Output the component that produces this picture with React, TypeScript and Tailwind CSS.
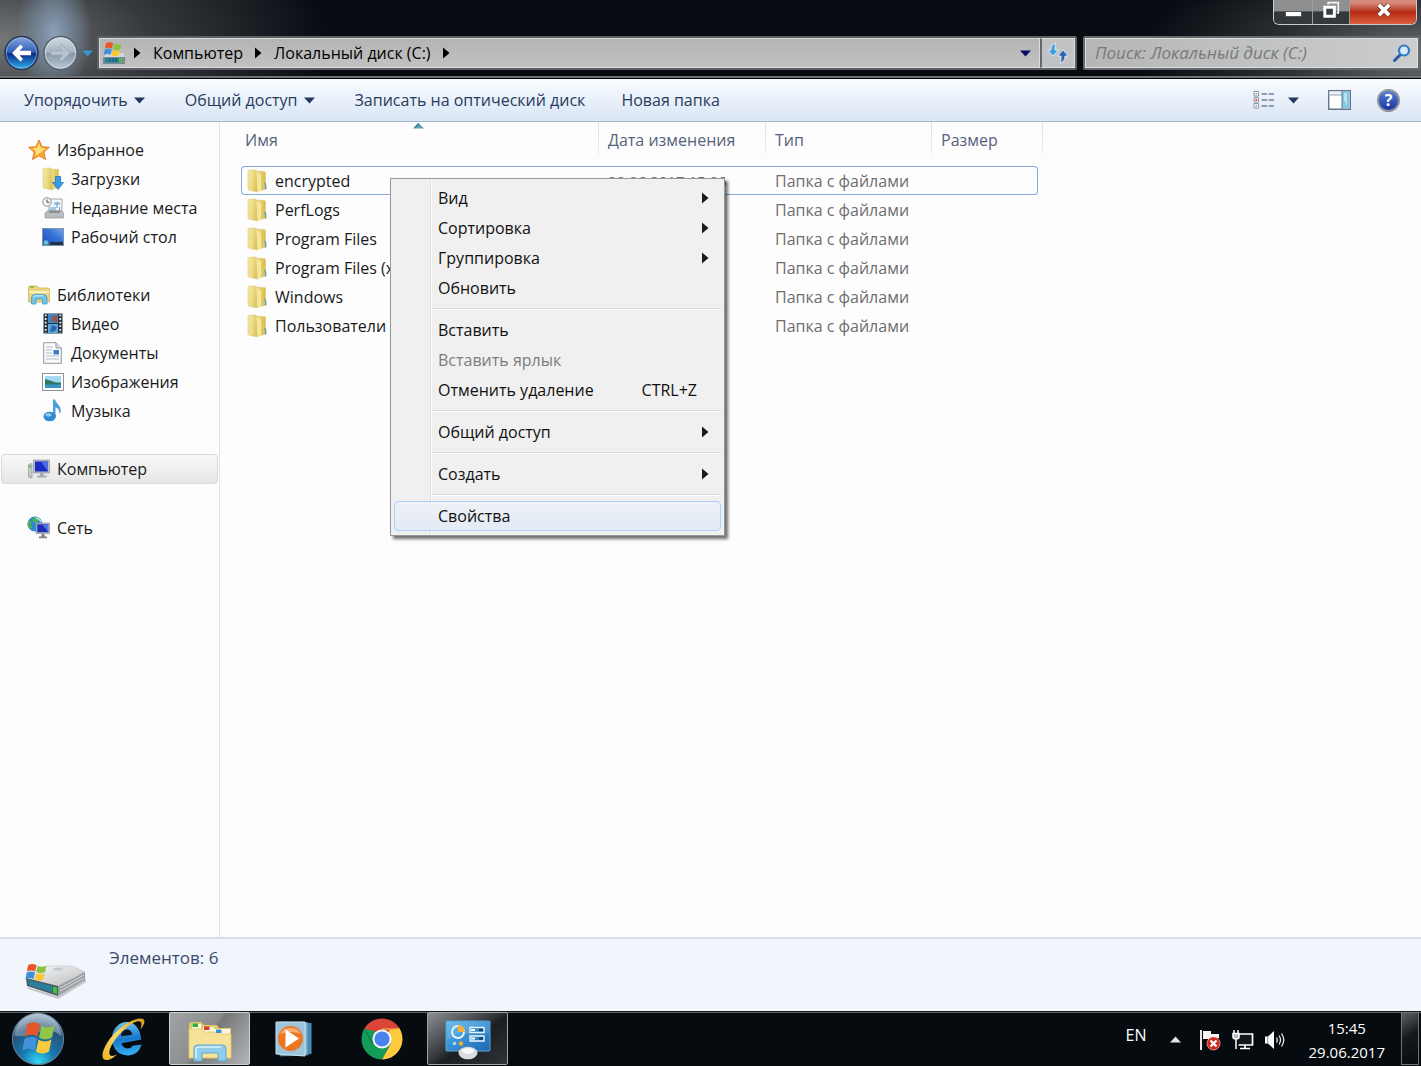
import React from "react";

/* ---------- shared drawings ---------- */

function FlagShapes() {
  return (
    <>
      <path d="M1 3.2C4 1.6 7 1.6 9.6 3.2L8.2 9.6C5.6 8.2 2.8 8.2 0 9.6Z" fill="#e8562a" />
      <path d="M10.6 3.7C13.4 5.2 16.4 5.2 19.4 3.7L18 10.1C15 11.6 12 11.6 9.2 10.1Z" fill="#8cc33c" />
      <path d="M-.2 10.6C2.6 9.2 5.4 9.2 8 10.6L6.6 17C4 15.6 1.2 15.6-1.6 17Z" fill="#3f8fdc" />
      <path d="M9 11.2C11.8 12.6 14.8 12.6 17.8 11.2L16.4 17.6C13.4 19 10.4 19 7.6 17.6Z" fill="#fbc62e" />
    </>
  );
}

function DriveIcon() {
  return (
    <svg width="24" height="26" viewBox="0 0 24 26" aria-hidden="true">
      <path d="M1 18L5 13H21L23 18V24H1Z" fill="#d5d8da" />
      <path d="M1 17H23V24H1Z" fill="#7b8b92" />
      <path d="M3 18H17V22.500H3Z" fill="#2b7f9d" />
      <path d="M8 18v4M11 18v4M14 18v4" stroke="#1d5871" />
      <path d="M17 18h3v4.500h-3Z" fill="#4fc044" />
      <g transform="translate(3 .5) scale(.84)"><FlagShapes /></g>
    </svg>
  );
}

function Caret({ className }: { className: string }) {
  return (
    <svg className={className} width="11" height="7" viewBox="0 0 11 7" aria-hidden="true">
      <path d="M0 .5H11L5.500 6.500Z" fill="currentColor" />
    </svg>
  );
}

function RightArrow({ className }: { className: string }) {
  return (
    <svg className={className} width="7" height="12" viewBox="0 0 7 12" aria-hidden="true">
      <path d="M0 .5L6.500 6L0 11.500Z" fill="currentColor" />
    </svg>
  );
}

function FolderIcon() {
  return (
    <svg width="20" height="24" viewBox="0 0 20 24" aria-hidden="true">
      <defs>
        <linearGradient id="foldLeft" x1="0" x2="1" y1="0" y2=".3">
          <stop offset="0" stopColor="#f3e9a8" />
          <stop offset=".6" stopColor="#ecdb84" />
          <stop offset="1" stopColor="#dcc25c" />
        </linearGradient>
        <linearGradient id="foldRight" x1="0" x2="1" y1="0" y2="0">
          <stop offset="0" stopColor="#faf3c0" />
          <stop offset=".45" stopColor="#e9d472" />
          <stop offset="1" stopColor="#d8bb4b" />
        </linearGradient>
      </defs>
      <path d="M8 2L17 2.500Q18.500 2.500 18.500 4V20L10 22.500Z" fill="url(#foldRight)" stroke="#d9c56c" strokeWidth=".6" />
      <path d="M1 2.500Q1 1.500 2.500 1.300L8 1Q9.500 1 9.500 2.500L10.500 23L2.500 21.300Q1 21 1 19.500Z" fill="url(#foldLeft)" stroke="#dcc976" strokeWidth=".6" />
      <path d="M9.500 3.500L14 6V21.300L10.500 23Z" fill="#f4e79b" />
      <path d="M17.500 14Q19.200 15.500 18.600 20.500" stroke="#5f9fb4" strokeWidth="1.400" fill="none" />
    </svg>
  );
}

/* ---------- sidebar icons ---------- */

function StarIcon() {
  return (
    <svg width="22" height="22" viewBox="0 0 22 22" aria-hidden="true">
      <path d="M11 1L14 7.700L21.300 8.300L15.900 13.200L17.500 20.500L11 16.800L4.500 20.500L6.100 13.200L.7 8.300L8 7.700Z" fill="#f8a82f" stroke="#de7c28" strokeLinejoin="round" />
      <path d="M11 4L13 9L17.500 9.500L13.500 13L11 14.500L7.500 17L8 12.500L4.500 9.500L9 9Z" fill="#fde079" />
    </svg>
  );
}

function DownloadsIcon() {
  return (
    <svg width="22" height="24" viewBox="0 0 22 24" aria-hidden="true">
      <path d="M8 2L16.500 2.500V20L10 22.500Z" fill="url(#foldRight)" stroke="#d9c56c" strokeWidth=".6" />
      <path d="M1 2Q1 1.500 2.500 1.300L8 1Q9.500 1 9.500 2.500L10.500 23L1 21Z" fill="url(#foldLeft)" stroke="#dcc976" strokeWidth=".6" />
      <path d="M13.500 9.500H18.500V15.500H21.500L16 22.500L10.500 15.500H13.500Z" fill="#349ce8" stroke="#1f72c0" strokeWidth=".8" />
    </svg>
  );
}

function RecentIcon() {
  return (
    <svg width="22" height="22" viewBox="0 0 22 22" aria-hidden="true">
      <path d="M7 2H20V16H7Z" fill="#f4f7fa" stroke="#9fa9b3" />
      <path d="M12 5H18V8H12ZM8 10H14V14H8Z" fill="#9fc8e6" />
      <path d="M15 5v6M17.500 10v4" stroke="#5c9bd0" />
      <path d="M3 16L6 13.500H19.500L21.500 16V21H3Z" fill="#b9bdc1" stroke="#92979c" strokeWidth=".7" />
      <path d="M7 15H18" stroke="#5f6468" />
      <circle cx="5" cy="5" r="4.300" fill="#f2f3f4" stroke="#8d9398" />
      <path d="M5 2.500V5.300H7.500" stroke="#555" fill="none" />
    </svg>
  );
}

function DesktopIcon() {
  return (
    <svg width="22" height="18" viewBox="0 0 22 18" aria-hidden="true">
      <defs>
        <linearGradient id="desk" x1="0" y1="1" x2="1" y2="0">
          <stop offset="0" stopColor="#1b4fb4" />
          <stop offset=".6" stopColor="#3674d8" />
          <stop offset="1" stopColor="#78a9ec" />
        </linearGradient>
      </defs>
      <rect x=".5" y=".5" width="21" height="17" fill="url(#desk)" stroke="#7f93a8" />
      <path d="M8 14H21V17H8Z" fill="#1f3148" />
      <path d="M1 14H8V17H1Z" fill="#3d6d96" />
      <circle cx="4" cy="14.500" r="2.200" fill="#67c0e8" />
    </svg>
  );
}

function LibraryIcon() {
  return (
    <svg width="22" height="20" viewBox="0 0 22 20" aria-hidden="true">
      <path d="M.5 3Q.5 1 2 1H9L11 3H20Q21.500 3 21.500 5V17H.5Z" fill="#ecd57f" stroke="#d0b358" strokeWidth=".8" />
      <path d="M2 2H6" stroke="#7bbd48" strokeWidth="1.500" />
      <path d="M1 6H21V8H1Z" fill="#faf1bd" />
      <path d="M3.500 19V13Q3.500 9.500 7.500 9.500H15Q19 9.500 19 13V19H14.500V14H8V19Z" fill="#74c4e8" stroke="#3f9dc9" strokeWidth=".8" />
      <path d="M5 12Q6 10.800 8 10.800H15" stroke="#d5f0fb" fill="none" />
    </svg>
  );
}

function VideoIcon() {
  return (
    <svg width="20" height="21" viewBox="0 0 20 21" aria-hidden="true">
      <path d="M.5.500H19.500V20.500H.5Z" fill="#26323b" />
      <path d="M5 1H15V10H5Z" fill="#3f87c4" />
      <path d="M5 11H15V20H5Z" fill="#57a6dd" />
      <path d="M10 3L14 2V9L8 8Z" fill="#a4503e" />
      <path d="M9 12L14 14L12 18L7 19Z" fill="#2c66a4" />
      <path d="M2.700 1.500V20M17.300 1.500V20" stroke="#e6edf2" strokeWidth="1.800" strokeDasharray="1.800 1.800" />
    </svg>
  );
}

function DocumentIcon() {
  return (
    <svg width="19" height="22" viewBox="0 0 19 22" aria-hidden="true">
      <path d="M.7.700H13L18.300 6V21.300H.7Z" fill="#fbfcfd" stroke="#8e979f" />
      <path d="M13 .7V6H18.300" fill="#dfe4e8" stroke="#8e979f" />
      <path d="M3 5H10M3 8H9M3 11H9M3 14H16M3 17H16" stroke="#a8bccd" />
      <path d="M10.500 8H16V12.500H10.500Z" fill="#3d7cbc" />
    </svg>
  );
}

function PicturesIcon() {
  return (
    <svg width="22" height="18" viewBox="0 0 22 18" aria-hidden="true">
      <rect x=".5" y=".5" width="21" height="17" fill="#fdfdfd" stroke="#8b949b" />
      <path d="M3 3H19V15H3Z" fill="#a4d9f4" />
      <path d="M3 6C8 7 12 10 19 9.500V12H3Z" fill="#2c7a63" />
      <path d="M3 11.500H19V15H3Z" fill="#3595c9" />
    </svg>
  );
}

function MusicIcon() {
  return (
    <svg width="19" height="23" viewBox="0 0 19 23" aria-hidden="true">
      <path d="M10 .5H12.200C12.500 4.500 18.500 6 17.800 13L16.500 15C16.500 10 14.500 9 12.500 8.500V17H10Z" fill="#4a9fdc" />
      <ellipse cx="6.700" cy="17.500" rx="6.200" ry="4.800" fill="#2f8bd0" />
      <ellipse cx="5.500" cy="15.800" rx="3.200" ry="1.800" fill="#8bcbf0" />
    </svg>
  );
}

function ComputerIcon() {
  return (
    <svg width="22" height="20" viewBox="0 0 22 20" aria-hidden="true">
      <path d="M.5 5.500L4 4.500V19L.5 18Z" fill="#c6cbc9" stroke="#8f9694" strokeWidth=".7" />
      <path d="M1.300 7.500H3" stroke="#47b82b" strokeWidth="2" />
      <path d="M5.500 1H21.500V14H5.500Z" fill="#b9bdc6" stroke="#858a94" strokeWidth=".6" />
      <path d="M7 2.500H20V12.500H7Z" fill="#1a2cc0" />
      <path d="M13 2.500H20V12.500Z" fill="#4b6be4" />
      <path d="M12 14H15.500V16.500H18.500V18.500H9V16.500H12Z" fill="#a5abb2" />
    </svg>
  );
}

function NetworkIcon() {
  return (
    <svg width="23" height="23" viewBox="0 0 23 23" aria-hidden="true">
      <circle cx="8" cy="8" r="7.500" fill="#2f88d6" />
      <path d="M2 4C5 5 5 7 3.500 9L5 12L3 13C0 10 0 7 2 4ZM7 1L12 2L11 6L7 7L5.500 4Z" fill="#4bb54a" />
      <path d="M9 2Q13 3 14 6" stroke="#b9e2f7" fill="none" strokeWidth="1.500" />
      <path d="M9 7H22.500V17.500H9Z" fill="#b3bac7" stroke="#7f8796" strokeWidth=".6" />
      <path d="M10.300 8.300H21.200V16.200H10.300Z" fill="#1a2cb8" />
      <path d="M15 8.300H21.200V16Z" fill="#4f74e6" />
      <path d="M14.500 18H17.500V20.500H20V22.300H12V20.500H14.500Z" fill="#7d838c" />
    </svg>
  );
}

/* ---------- window frame ---------- */

function TitleBar() {
  return (
    <header className="h-[79px] shrink-0 border-b border-black bg-[#080c12] bg-[radial-gradient(ellipse_38px_60px_at_54px_34px,#8ba0b8_0%,#75869ab0_55%,transparent_100%),radial-gradient(ellipse_330px_150px_at_0px_40px,#757879_0%,#55585b99_45%,transparent_100%),radial-gradient(ellipse_280px_110px_at_100%_55px,#6c6e70_0%,#45484a99_50%,transparent_100%)] shadow-[inset_0_-2px_0_#6d7276]">
      <div className="flex h-[25px] justify-end pr-1">
        <div className="flex overflow-hidden rounded-b-md border border-t-0 border-[#c8cacc] bg-[#202224]">
          <button aria-label="Свернуть" className="flex w-[39px] items-end justify-center border-r border-[#9a9c9e] bg-linear-to-b from-[#8d8f91] from-45% to-[#35383b] to-50% pb-[7px]">
            <span className="h-[6px] w-[17px] border border-[#55585b] bg-white" />
          </button>
          <button aria-label="Свернуть в окно" className="flex w-[37px] items-center justify-center border-r border-[#9a9c9e] bg-linear-to-b from-[#8d8f91] from-45% to-[#35383b] to-50% pb-1">
            <svg width="18" height="18" viewBox="0 0 16 16" aria-hidden="true">
              <path d="M5.500 3V1.500H14.500V10.500H13" fill="none" stroke="#f4f4f4" strokeWidth="1.500" />
              <path d="M2.500 5.500H11V13.500H2.500Z" fill="#3a3d40" stroke="#fff" strokeWidth="2.600" />
            </svg>
          </button>
          <button aria-label="Закрыть" className="flex w-[66px] items-center justify-center bg-linear-to-b from-[#d58a7a] from-10% via-[#b5280f] via-50% to-[#dc6040] pb-1 pl-0.5">
            <svg width="18" height="16" viewBox="0 0 16 14" aria-hidden="true">
              <path d="M3.500 2.500L12.500 11.500M12.500 2.500L3.500 11.500" stroke="#6a3a35" strokeWidth="5" />
              <path d="M3.500 2.500L12.500 11.500M12.500 2.500L3.500 11.500" stroke="#fff" strokeWidth="3.300" />
            </svg>
          </button>
        </div>
      </div>
      <div className="mt-[11px] flex h-[34px] items-center pr-px">
        <button aria-label="Назад" className="ml-1">
          <svg width="36" height="36" viewBox="0 0 36 36" aria-hidden="true">
            <defs>
              <linearGradient id="back" x1="0" y1="0" x2="0" y2="1">
                <stop offset="0" stopColor="#8aa9de" />
                <stop offset=".48" stopColor="#2f5cb5" />
                <stop offset=".52" stopColor="#0a2a86" />
                <stop offset="1" stopColor="#34b4ee" />
              </linearGradient>
            </defs>
            <circle cx="17.500" cy="18" r="16.500" fill="url(#back)" stroke="#263858" strokeWidth="1.500" />
            <circle cx="17.500" cy="18" r="15.200" fill="none" stroke="#a4c0ec" strokeOpacity=".6" />
            <path d="M16.500 9.500L8 18L16.500 26.500L19 24L15.500 20.300H27V15.700H15.500L19 12Z" fill="#fff" />
          </svg>
        </button>
        <button aria-label="Вперёд" className="ml-[3px]">
          <svg width="35" height="36" viewBox="0 0 35 36" aria-hidden="true">
            <defs>
              <linearGradient id="fwd" x1="0" y1="0" x2="0" y2="1">
                <stop offset="0" stopColor="#d1dbe5" />
                <stop offset=".48" stopColor="#a6b3c0" />
                <stop offset=".52" stopColor="#8797a6" />
                <stop offset="1" stopColor="#bccbd8" />
              </linearGradient>
            </defs>
            <circle cx="17.500" cy="18" r="16.600" fill="url(#fwd)" stroke="#56636f" strokeWidth="1.500" />
            <circle cx="17.500" cy="18" r="15.200" fill="none" stroke="#dfe8f0" strokeOpacity=".7" />
            <path d="M18.500 9.500L27 18L18.500 26.500L16 24L19.500 20.300H8V15.700H19.500L16 12Z" fill="#b8c3cd" stroke="#94a2ae" strokeWidth=".7" />
          </svg>
        </button>
        <button aria-label="Последние страницы" className="ml-[3px] flex w-[13px] justify-center">
          <Caret className="text-[#3a94d0]" />
        </button>
        <nav aria-label="Адрес" className="ml-[3px] flex h-[34px] flex-1 items-stretch rounded-xs border-2 border-[#5d6062] text-black">
          <div className="flex flex-1 items-center border border-[#dcdcdc] bg-linear-to-b from-[#b4b4b4] to-[#c2c2c2] pl-0.5">
            <DriveIcon />
            <RightArrow className="ml-2" />
            <button className="ml-3">Компьютер</button>
            <RightArrow className="ml-3" />
            <button className="ml-3">Локальный диск (C:)</button>
            <RightArrow className="ml-3" />
            <button aria-label="Предыдущие расположения" className="mr-2 ml-auto">
              <Caret className="text-[#0b0b66]" />
            </button>
          </div>
          <button aria-label="Обновить" className="flex w-[35px] items-center justify-center border border-l-2 border-[#dcdcdc] border-l-[#66696c] bg-[#c0c2c4]">
            <svg width="22" height="22" viewBox="0 0 22 22" aria-hidden="true">
              <path d="M9 1C5.500 2 4 4.500 4 8H.7L6 14L11.300 8H8C8 5 8 3 9 1Z" fill="#3b9be0" stroke="#f0f6fb" strokeWidth=".8" />
              <path d="M13 21C16.500 20 18 17.500 18 14H21.300L16 8L10.700 14H14C14 17 14 19 13 21Z" fill="#2a62b4" stroke="#f0f6fb" strokeWidth=".8" />
            </svg>
          </button>
        </nav>
        <div className="ml-[6px] flex h-[34px] w-[337px] items-center rounded-xs border-2 border-[#66696b] bg-linear-to-r from-[#b6b6b6] to-[#cbcdce] pr-1.5 shadow-[inset_0_0_0_1px_#dedede]">
          <input type="text" aria-label="Поиск" placeholder="Поиск: Локальный диск (C:)" className="w-full min-w-0 flex-1 bg-transparent pl-[10px] text-[17px] italic outline-none placeholder:text-[#77797b]" />
          <svg width="20" height="20" viewBox="0 0 20 20" aria-hidden="true">
            <path d="M9 11L2.500 17.500" stroke="#2a57a8" strokeWidth="3" strokeLinecap="round" />
            <circle cx="12" cy="7.500" r="5" fill="#d8e8f4" stroke="#2f7bcb" strokeWidth="2.200" />
          </svg>
        </div>
      </div>
    </header>
  );
}

function Toolbar() {
  return (
    <div className="flex h-[43px] shrink-0 items-center border-b border-[#a3b7cb] bg-linear-to-b from-[#fafdff] via-[#e8f0fa] via-50% to-[#dae6f4] pr-[21px] pl-6 text-[#2a3b5e]">
      <button className="flex items-center gap-1.5">
        Упорядочить <Caret className="text-[#23395d]" />
      </button>
      <button className="ml-10 flex items-center gap-1.5">
        Общий доступ <Caret className="text-[#23395d]" />
      </button>
      <button className="ml-10">Записать на оптический диск</button>
      <button className="ml-9">Новая папка</button>
      <button aria-label="Изменить представление" className="ml-auto">
        <svg width="22" height="20" viewBox="0 0 22 20" aria-hidden="true">
          <path d="M1 1.500H5.500V6H1ZM1 7.500H5.500V12H1ZM1 13.500H5.500V18H1Z" fill="#fff" stroke="#8996a6" />
          <path d="M2.500 3h1.500v1.500h-1.500ZM2.500 15h1.500v1.500h-1.500Z" fill="#7c93b3" />
          <path d="M2.300 8.800h2v2h-2Z" fill="#d84a3a" />
          <path d="M8.500 4H21M8.500 10H21M8.500 16H21" stroke="#71809a" strokeWidth="1.600" strokeDasharray="5.500 1.500" />
        </svg>
      </button>
      <button aria-label="Дополнительно" className="ml-[13px]">
        <Caret className="text-[#23395d]" />
      </button>
      <button aria-label="Область просмотра" className="ml-[29px]">
        <svg width="23" height="20" viewBox="0 0 23 20" aria-hidden="true">
          <path d="M.7.700H22.300V19.300H.7Z" fill="#fff" stroke="#60778f" strokeWidth="1.400" />
          <path d="M1.400 1.400H14V4.500H1.400Z" fill="#e9eff5" />
          <path d="M1.400 5H14" stroke="#8fa1b3" />
          <path d="M14 1.400H21.600V18.600H14Z" fill="#83c8dc" />
          <path d="M14 1V19" stroke="#60778f" />
          <path d="M16 3L19 3V16L16 10Z" fill="#b9e4ef" />
        </svg>
      </button>
      <button aria-label="Справка" className="ml-[26px] flex size-[23px] items-center justify-center rounded-full border-2 border-[#8f959d] bg-linear-to-b from-[#5d7fd4] to-[#1a34a0] text-base leading-4 font-bold text-white">
        ?
      </button>
    </div>
  );
}

/* ---------- navigation pane ---------- */

type NavNode = { label: string; icon: React.ReactNode };

const favorites: NavNode[] = [
  { label: "Загрузки", icon: <DownloadsIcon /> },
  { label: "Недавние места", icon: <RecentIcon /> },
  { label: "Рабочий стол", icon: <DesktopIcon /> },
];

const libraries: NavNode[] = [
  { label: "Видео", icon: <VideoIcon /> },
  { label: "Документы", icon: <DocumentIcon /> },
  { label: "Изображения", icon: <PicturesIcon /> },
  { label: "Музыка", icon: <MusicIcon /> },
];

function NavRoot({ label, icon, selected = false }: NavNode & { selected?: boolean }) {
  return (
    <a
      href="#"
      className={
        selected
          ? "mx-px flex h-[30px] items-center rounded-sm border border-[#d9d9d9] bg-linear-to-b from-[#f8f8f8] to-[#e6e6e6] pl-[25px]"
          : "mx-px flex h-[29px] items-center border-l border-transparent pl-[25px]"
      }
    >
      <span className="flex w-[23px] justify-center">{icon}</span>
      <span className="ml-[7px]">{label}</span>
    </a>
  );
}

function NavGroup({ root, items }: { root: NavNode; items: NavNode[] }) {
  return (
    <div>
      <NavRoot {...root} />
      <ul>
        {items.map((item) => (
          <li key={item.label}>
            <a href="#" className="flex h-[29px] items-center pl-[41px]">
              <span className="flex w-[23px] justify-center">{item.icon}</span>
              <span className="ml-[7px]">{item.label}</span>
            </a>
          </li>
        ))}
      </ul>
    </div>
  );
}

function Sidebar() {
  return (
    <nav aria-label="Область переходов" className="flex w-[220px] shrink-0 flex-col gap-[29px] border-r border-[#dfe4f0] pt-[13px] text-[#1a1a1a]">
      <NavGroup root={{ label: "Избранное", icon: <StarIcon /> }} items={favorites} />
      <NavGroup root={{ label: "Библиотеки", icon: <LibraryIcon /> }} items={libraries} />
      <NavRoot label="Компьютер" icon={<ComputerIcon />} selected />
      <NavRoot label="Сеть" icon={<NetworkIcon />} />
    </nav>
  );
}

/* ---------- file list ---------- */

const folders = [
  { name: "encrypted", date: "29.06.2017 15:06" },
  { name: "PerfLogs", date: "14.07.2009 6:20" },
  { name: "Program Files", date: "29.06.2017 9:40" },
  { name: "Program Files (x86)", date: "29.06.2017 9:40" },
  { name: "Windows", date: "29.06.2017 9:35" },
  { name: "Пользователи", date: "29.06.2017 9:20" },
];

function HeadCell({ children, className }: { children?: React.ReactNode; className: string }) {
  return (
    <th scope="col" className="p-0 text-left align-top font-normal text-[#56627a]">
      <div className={`flex h-[35px] items-center border-r [border-image:linear-gradient(#dde3ec,#e6eaf1_80%,transparent)_1] ${className}`}>{children}</div>
    </th>
  );
}

function FileList() {
  return (
    <main className="min-w-0 flex-1 pl-[21px]">
      <table className="w-[802px] table-fixed border-separate border-spacing-0">
        <colgroup>
          <col className="w-[358px]" />
          <col className="w-[167px]" />
          <col className="w-[166px]" />
          <col className="w-[106px]" />
          <col className="w-[5px]" />
        </colgroup>
        <thead>
          <tr className="h-11">
            <HeadCell className="relative pl-1">
              Имя
              <svg className="absolute top-0 left-[172px]" width="11" height="7" viewBox="0 0 11 7" aria-hidden="true">
                <path d="M0 6.500L5.500 1L11 6.500Z" fill="#5e9fb8" />
                <path d="M0 6.500L5.500 1V3Z" fill="#33637c" />
              </svg>
            </HeadCell>
            <HeadCell className="pl-[9px]">Дата изменения</HeadCell>
            <HeadCell className="pl-[9px]">Тип</HeadCell>
            <HeadCell className="border-r-0 pl-[9px]">Размер</HeadCell>
            <HeadCell className="" />
          </tr>
        </thead>
        <tbody className="[&_td]:h-[29px] [&_td]:p-0">
          {folders.map((folder, index) => {
            const focused = index === 0;
            return (
              <tr key={folder.name}>
                <td className={focused ? "rounded-l-sm border-y border-l border-[#84a9d8]" : "border-l border-transparent"}>
                  <div className="flex items-center pl-[5px] text-[#1a1a1a]">
                    <FolderIcon />
                    <span className="ml-[8px]">{folder.name}</span>
                  </div>
                </td>
                <td className={focused ? "border-y border-[#84a9d8] text-[15px] text-[#6d6d6d]" : "text-[15px] text-[#6d6d6d]"}>
                  <span className="ml-[9px]">{folder.date}</span>
                </td>
                <td className={focused ? "border-y border-[#84a9d8] text-[#6d6d6d]" : "text-[#6d6d6d]"}>
                  <span className="ml-[9px]">Папка с файлами</span>
                </td>
                <td className={focused ? "rounded-r-sm border-y border-r border-[#84a9d8]" : ""} />
                <td />
              </tr>
            );
          })}
        </tbody>
      </table>
    </main>
  );
}

/* ---------- context menu ---------- */

type MenuEntry = { label: string; submenu?: boolean; disabled?: boolean; hot?: boolean; shortcut?: string };

const menuGroups: MenuEntry[][] = [
  [
    { label: "Вид", submenu: true },
    { label: "Сортировка", submenu: true },
    { label: "Группировка", submenu: true },
    { label: "Обновить" },
  ],
  [
    { label: "Вставить" },
    { label: "Вставить ярлык", disabled: true },
    { label: "Отменить удаление", shortcut: "CTRL+Z" },
  ],
  [{ label: "Общий доступ", submenu: true }],
  [{ label: "Создать", submenu: true }],
  [{ label: "Свойства", hot: true }],
];

function ContextMenu() {
  return (
    <div role="menu" className="absolute top-[178px] left-[390px] w-[335px] border border-[#979797] bg-[#f0f0f0] bg-[linear-gradient(90deg,transparent_39px,#dfdfdf_39px,#dfdfdf_40px,#fbfbfb_40px,#fbfbfb_41px,transparent_41px)] px-[3px] py-1 shadow-[3px_3px_3px_#00000090]">
      {menuGroups.map((group, index) => (
        <div key={group[0].label} role="group">
          {index > 0 && (
            <div role="separator" className="ml-[38px] flex h-3 items-center">
              <div className="h-0.5 w-full border-t border-b border-t-[#dcdcdc] border-b-white" />
            </div>
          )}
          {group.map((entry) => (
            <button
              key={entry.label}
              role="menuitem"
              disabled={entry.disabled}
              className={
                entry.hot
                  ? "flex h-[30px] w-full items-center rounded-sm border border-[#aecff7] bg-linear-to-b from-[#eef2f8c0] to-[#dfe9f7c0] pr-3 pl-[43px] text-[#111]"
                  : "flex h-[30px] w-full items-center border border-transparent pr-[11px] pl-[43px] text-[#111] disabled:text-[#7d7d7d]"
              }
            >
              {entry.label}
              {entry.shortcut && <span className="mr-3 ml-auto">{entry.shortcut}</span>}
              {entry.submenu && <RightArrow className="ml-auto text-[#1a1a1a]" />}
            </button>
          ))}
        </div>
      ))}
    </div>
  );
}

/* ---------- details pane ---------- */

function DetailsPane() {
  return (
    <footer className="flex h-[74px] shrink-0 items-start border-t-2 border-[#d5dde8] bg-[#f1f5fc] pl-[24px] text-[#3a4a6a]">
      <svg className="mt-[22px]" width="64" height="38" viewBox="0 0 64 38" aria-hidden="true">
        <defs>
          <linearGradient id="drv" x1="0" y1="0" x2="1" y2="1">
            <stop offset="0" stopColor="#fafafa" />
            <stop offset="1" stopColor="#b9bcbf" />
          </linearGradient>
        </defs>
        <path d="M3 26L34 35L62 18V21L34 38L4 28Z" fill="#00000030" />
        <path d="M2 17L22 5H48L61 11L34 25Z" fill="url(#drv)" stroke="#c3c6c8" strokeWidth=".6" />
        <path d="M34 25L61 11V19L34 35Z" fill="#9b9fa2" />
        <path d="M36 27L60 14M36 30L60 17" stroke="#d8dadb" />
        <path d="M2 17L34 25V35L3 25Z" fill="#4b5961" />
        <path d="M4 19L28 25V31L5 24.500Z" fill="#2a7f9e" />
        <path d="M29 25.500L33 26.500V33L29 31.800Z" fill="#3fc23c" />
        <ellipse cx="34" cy="8" rx="5" ry="1.500" fill="#c5c8ca" />
        <g transform="translate(3 1)"><FlagShapes /></g>
      </svg>
      <p className="mt-[7px] ml-[21px] text-[17px]">Элементов: 6</p>
    </footer>
  );
}

/* ---------- taskbar ---------- */

function StartOrb() {
  return (
    <svg width="54" height="54" viewBox="0 0 54 54" aria-hidden="true">
      <defs>
        <radialGradient id="orb" cx=".5" cy=".95" r=".95">
          <stop offset="0" stopColor="#35d6f8" />
          <stop offset=".35" stopColor="#1478ae" />
          <stop offset=".7" stopColor="#26537b" />
          <stop offset="1" stopColor="#9fb6c8" />
        </radialGradient>
      </defs>
      <circle cx="27" cy="27" r="25.500" fill="url(#orb)" stroke="#5f7d92" strokeWidth="1.200" />
      <path d="M4 24A23 23 0 0 1 50 24Q40 15 27 20T4 24Z" fill="#fff" fillOpacity=".28" />
      <path d="M16 12.500C20 9.500 25 9.500 29 12.500L26.500 24.500C22.500 22 18 22 14 25Z" fill="#e4572b" />
      <path d="M30.500 13.500C34.500 16 39 16 43.500 13.500L41 25.500C36.500 28 32 28 28 25.500Z" fill="#93c547" />
      <path d="M13.500 27C17.500 24 22 24 26 26.500L23.500 38.500C19.500 36 15.500 36 11.500 38.500Z" fill="#4393dc" />
      <path d="M27.500 27.500C31.500 30 36 30 40.500 27.500L38 39.500C33.500 42 29 42 25 39.500Z" fill="#fbca3a" />
    </svg>
  );
}

function BrowserEIcon() {
  return (
    <svg width="46" height="44" viewBox="0 0 46 44" aria-hidden="true">
      <defs>
        <linearGradient id="ie" x1="0" y1="0" x2="0" y2="1">
          <stop offset="0" stopColor="#69c4f2" />
          <stop offset=".5" stopColor="#1a78cc" />
          <stop offset="1" stopColor="#35b0f2" />
        </linearGradient>
        <linearGradient id="ieRing" x1="0" y1="1" x2="1" y2="0">
          <stop offset="0" stopColor="#f0b323" />
          <stop offset=".5" stopColor="#fbd968" />
          <stop offset="1" stopColor="#d99a18" />
        </linearGradient>
      </defs>
      <g transform="rotate(-8 26 22)">
        <path d="M40 24.500C41 12 34.500 5 26.500 5S11 12 11 22S17.500 38.500 26.500 38.500C33 38.500 37.500 35 39.500 29.500H30.500C29.500 31 28.500 31.500 26.500 31.500C22.500 31.500 20.300 29 20 25.500L40 24.500Z" fill="url(#ie)" />
        <path d="M20.500 18.500C21 14.500 23.500 12.500 26.500 12.500S31.500 14.500 31.800 18.500Z" fill="#07121c" />
      </g>
      <path d="M39.500 12.500C45 6 45 .5 38 1.500C28 3 14 13 6 26C-.5 37 0 44 7 43C10 42.500 13.500 40 16 37.500C11 40 7.500 39.500 8.500 34C10 26 22 11 33 5.500C39.500 2.500 42 4.500 39.500 12.500Z" fill="url(#ieRing)" />
    </svg>
  );
}

function ExplorerIcon() {
  return (
    <svg width="46" height="42" viewBox="0 0 46 42" aria-hidden="true">
      <path d="M2 5Q2 2 5 2H14L17 5H30L32 8H44V37H2Z" fill="#e6c766" />
      <path d="M5 4H14V9H5ZM16 7H27V12H16ZM27 9H43V14H27Z" fill="#fdf9e0" />
      <path d="M2 9H15L18 12H28L30 14H44V38H2Z" fill="#f6e397" stroke="#e2c768" strokeWidth=".8" />
      <path d="M5.500 3.500H11V7H5.500Z" fill="#2faf3a" />
      <path d="M17 6.500H22.500V10H17Z" fill="#d43d2c" />
      <path d="M29 9.500H34.500V13H29Z" fill="#3a94d8" />
      <path d="M7 41V28Q7 25 11 25H35Q39 25 39 28V41H31V33H15V41Z" fill="#8fcdea" stroke="#5aa9d0" />
      <path d="M9 38V29Q9 27 12 27H34" stroke="#dff4fd" strokeWidth="1.500" fill="none" />
    </svg>
  );
}

function PlayerIcon() {
  return (
    <svg width="38" height="36" viewBox="0 0 38 36" aria-hidden="true">
      <path d="M8 1L36.500 2V33L8 35Z" fill="#4a8eb4" />
      <path d="M5 1L33 1.500V34L5 35Z" fill="#7ab6d3" stroke="#3b7798" strokeWidth=".8" />
      <path d="M1 1H30V35L1 33Z" fill="#9dc4da" stroke="#cde5f0" />
      <circle cx="15.500" cy="17.500" r="12.500" fill="#ee7620" />
      <path d="M5 13A12 12 0 0 1 26 13Q16 9 5 13Z" fill="#f9ae70" />
      <path d="M10.500 8.500L24 17.500L10.500 26.500Z" fill="#fff" />
    </svg>
  );
}

function ChromeIcon() {
  return (
    <svg width="42" height="42" viewBox="0 0 42 42" aria-hidden="true">
      <path d="M21 21L3.250 10.750A20.500 20.500 0 0 1 38.750 10.750Z" fill="#db4437" />
      <path d="M3.250 10.750A20.500 20.500 0 0 0 21 41.500L29.500 26L21 21L12 26Z" fill="#139b58" />
      <path d="M38.750 10.750A20.500 20.500 0 0 1 21 41.500L29.500 26L28 12Z" fill="#fecb3f" />
      <path d="M21 11.500H39.200L38.500 10.500H21Z" fill="#fecb3f" />
      <path d="M3.250 10.750L12.500 26L17 14Z" fill="#139b58" />
      <circle cx="21" cy="21" r="9.600" fill="#f4f6f7" />
      <circle cx="21" cy="21" r="7.600" fill="#4a83ee" />
    </svg>
  );
}

function ControlPanelIcon() {
  return (
    <svg width="46" height="40" viewBox="0 0 46 40" aria-hidden="true">
      <defs>
        <linearGradient id="cp" x1="0" y1="0" x2="1" y2="1">
          <stop offset="0" stopColor="#55b6ee" />
          <stop offset="1" stopColor="#1c66b2" />
        </linearGradient>
      </defs>
      <rect x="1" y="1" width="44" height="30" rx="1" fill="url(#cp)" stroke="#5aa6da" />
      <path d="M2 2H44V14Q22 10 2 20Z" fill="#fff" fillOpacity=".12" />
      <circle cx="13" cy="12" r="6" fill="none" stroke="#eaf6fd" strokeWidth="1.800" />
      <path d="M13 12V5A7 7 0 0 1 20 12Z" fill="#f6b02b" />
      <path d="M25 7.500H39V12.500H25ZM25 16H39V21H25Z" fill="#2f86c9" stroke="#e9f5fc" strokeWidth="1.300" />
      <path d="M26 10h4M26 18.500h4" stroke="#fff" strokeWidth="1.800" />
      <path d="M34 10h4M34 18.500h4" stroke="#123f6c" strokeWidth="2.500" />
      <circle cx="9.500" cy="23.500" r="1.800" fill="#9be0f7" />
      <circle cx="16" cy="23.500" r="2.200" fill="#f6b02b" />
      <ellipse cx="23" cy="33" rx="9.500" ry="6.300" fill="#d9dbdc" />
      <ellipse cx="23" cy="31" rx="6" ry="3" fill="#f7f8f8" />
    </svg>
  );
}

function Taskbar() {
  return (
    <div className="flex h-[55px] shrink-0 items-center bg-[#060b10] pr-0.5 pl-[11px] text-white shadow-[inset_0_1px_0_#15191c,inset_0_2px_0_#5c6468]">
      <button aria-label="Пуск" className="shrink-0"><StartOrb /></button>
      <button aria-label="Internet Explorer" className="ml-[36px] shrink-0"><BrowserEIcon /></button>
      <button aria-label="Проводник" className="ml-[22px] flex h-[53px] w-[81px] shrink-0 items-center justify-center rounded-xs border border-[#d0d1d3] bg-[linear-gradient(125deg,#a2a3a5,#8b8c8e_45%,#77787a_50%,#b4b5b7)] pt-1">
        <ExplorerIcon />
      </button>
      <button aria-label="Проигрыватель" className="ml-[25px] shrink-0"><PlayerIcon /></button>
      <button aria-label="Google Chrome" className="ml-[48px] shrink-0"><ChromeIcon /></button>
      <button aria-label="Панель управления" className="ml-[24px] flex h-[53px] w-[81px] shrink-0 items-center justify-center rounded-xs border border-[#a0a2a4] bg-[linear-gradient(145deg,#8d8f91,#36393c_45%,#1b1e22_55%,#303336)] pt-0.5">
        <ControlPanelIcon />
      </button>
      <button className="mr-[23px] mb-2 ml-auto">EN</button>
      <button aria-label="Скрытые значки" className="mt-[2px] mr-[18px]">
        <svg width="11" height="7" viewBox="0 0 11 7" aria-hidden="true"><path d="M0 6.500L5.500 .5L11 6.500Z" fill="#e4e6e7" /></svg>
      </button>
      <button aria-label="Центр поддержки" className="mt-[3px]">
        <svg width="22" height="22" viewBox="0 0 22 22" aria-hidden="true">
          <path d="M2 1V21" stroke="#fff" strokeWidth="1.800" />
          <path d="M4 2H12V5H20V9H12L11 10H4Z" fill="#f5f6f6" />
          <circle cx="14.500" cy="14.500" r="6.500" fill="#d8251c" stroke="#f2a39c" strokeWidth=".8" />
          <path d="M11.500 11.500L17.500 17.500M17.500 11.500L11.500 17.500" stroke="#fff" strokeWidth="2.300" />
        </svg>
      </button>
      <button aria-label="Сеть" className="mt-[3px] ml-[11px]">
        <svg width="22" height="20" viewBox="0 0 22 20" aria-hidden="true">
          <path d="M7 4H20.500V15H6.500" fill="#15181a" stroke="#fff" strokeWidth="1.700" />
          <path d="M13 15V18.500M8 18.500H18" stroke="#fff" strokeWidth="1.700" />
          <path d="M2 0V4M6 0V4M1 3.500H7V7Q7 9 4 9Q1 9 1 7ZM4 9V19" fill="#bbb" stroke="#fff" strokeWidth="1.500" />
        </svg>
      </button>
      <button aria-label="Громкость" className="mt-[3px] ml-[10px]">
        <svg width="22" height="20" viewBox="0 0 22 20" aria-hidden="true">
          <path d="M1 6.500H4L10 1V19L4 13.500H1Z" fill="#fff" />
          <path d="M3.800 6V14" stroke="#8a8d8f" />
          <path d="M12.500 7.500Q14 10 12.500 12.500M15 5.500Q18 10 15 14.500M17.500 3.500Q22 10 17.500 16.500" fill="none" stroke="#e8e8e8" strokeWidth="1.300" />
        </svg>
      </button>
      <time className="mt-0.5 ml-[23px] text-center text-[15px] leading-6">
        15:45
        <br />
        29.06.2017
      </time>
      <button aria-label="Показать рабочий стол" className="ml-4 h-[53px] w-[18px] shrink-0 border border-[#6f7477] bg-[linear-gradient(150deg,#5c6063,#14191d_45%,#070b0f)]" />
    </div>
  );
}

export default function App() {
  return (
    <div className="relative flex h-screen min-h-[700px] flex-col overflow-hidden bg-[#fdfdfe] font-['Open_Sans','Noto_Sans',sans-serif] text-base leading-6 whitespace-nowrap">
      <TitleBar />
      <Toolbar />
      <div className="flex min-h-0 flex-1">
        <Sidebar />
        <FileList />
      </div>
      <DetailsPane />
      <Taskbar />
      <ContextMenu />
    </div>
  );
}
